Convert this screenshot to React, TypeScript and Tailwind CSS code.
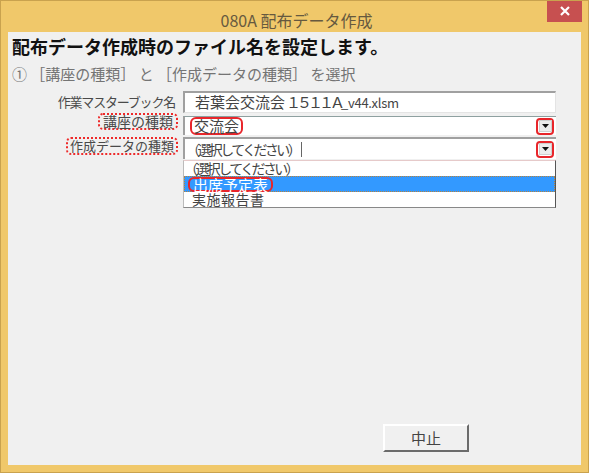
import React from "react";

const font = { fontFamily: '"Noto Sans CJK JP", "Noto Sans", sans-serif' };

const Arrow = () => (
    <div className="flex items-center justify-center rounded-[4px] border-2 border-[#e8262b] w-[18px] h-[17px] ml-auto mr-[2px]">
        <div className="flex items-center justify-center w-[13px] h-[12px] bg-[#ececec] border border-[#d0d0d0]">
            <svg width="7" height="4" viewBox="0 0 7 4">
                <path d="M0 0 L7 0 L3.5 4 Z" fill="#111" />
            </svg>
        </div>
    </div>
);

export default function App() {
    return (
        <div
            className="w-[589px] h-[473px] bg-[#f0c86a] border border-[#c9a24e] flex flex-col overflow-hidden"
            style={font}
        >
            {/* title bar */}
            <div className="relative h-[31px] flex items-center justify-center">
                <span className="text-[16px] text-[#66593f] mt-[6px] ml-[4px]">080A 配布データ作成</span>
                <div className="absolute top-[-1px] right-[6px] w-[35px] h-[22px] bg-[#c75050] flex items-center justify-center">
                    <svg width="10" height="10" viewBox="0 0 10 10">
                        <path d="M1 1 L9 9 M9 1 L1 9" stroke="#fff" strokeWidth="2.2" />
                    </svg>
                </div>
            </div>

            {/* content */}
            <div className="flex-1 mx-[7px] mb-[7px] bg-[#f0f0f0] flex flex-col">
                <h1 className="mt-[2px] pl-[4px] text-[18px] leading-[24px] font-bold text-[#111]">
                    配布データ作成時のファイル名を設定します。
                </h1>
                <p className="mt-[6px] pl-[4px] text-[15px] leading-[20px] text-[#747474]">
                    ① ［講座の種類］ と ［作成データの種類］ を選択
                </p>

                <div className="mt-[7px] grid grid-cols-[167px_373px] gap-x-[8px] text-[13px] text-[#4a4a4a]">
                    {/* row 1 */}
                    <div className="h-[22px] flex items-center justify-end tracking-[-1.2px]">作業マスターブック名</div>
                    <div className="h-[22px] bg-white border-t-2 border-l-2 border-[#a0a0a0] border-r border-b border-r-[#e4e4e4] border-b-[#e4e4e4] flex items-center pl-[10px] text-[15px] text-[#444]">
                        若葉会交流会<span className="tracking-[-4px] ml-[1px]">１５１１Ａ</span>
                        <span className="text-[13px] tracking-[-0.3px]">_v44.xlsm</span>
                    </div>

                    {/* row 2 */}
                    <div className="mt-[3px] h-[19px] flex items-start justify-end">
                        <span className="mt-[-3px] border-2 border-dotted border-[#ee2a2a] rounded-[5px] px-[3px] leading-[13px] text-[14px] mr-[-3px]">
                            講座の種類
                        </span>
                    </div>
                    <div className="mt-[3px] h-[19px] bg-white border-t border-l-2 border-t-[#8ea0a0] border-l-[#a0a0a0] flex items-center pl-[5px] text-[15px] text-[#444]">
                        <span className="border-2 border-[#e8262b] rounded-[6px] px-[2px] leading-[14px]">交流会</span>
                        <Arrow />
                    </div>

                    {/* row 3 */}
                    <div className="mt-[2px] h-[22px] flex items-start justify-end">
                        <span className="border-2 border-dotted border-[#ee2a2a] rounded-[5px] px-[2px] leading-[14px] mr-[-3px]">
                            作成データの種類
                        </span>
                    </div>
                    <div className="mt-[2px] h-[22px] bg-white border-t-2 border-l-2 border-[#a0a0a0] flex items-center pl-[1px] text-[14px] text-[#444]">
                        <span className="tracking-[-2.6px]">（選択してください）</span>
                        <span className="ml-[2px] w-px h-[15px] bg-[#666]"></span>
                        <Arrow />
                    </div>

                    {/* dropdown list */}
                    <div></div>
                    <div className="mt-[1px] h-[48px] bg-white border border-t-[#e6caca] border-l-[#bbbbbb] border-r-[#555] border-b-[#888] flex flex-col text-[14px] text-[#444]">
                        <div className="h-[15px] leading-[14px] tracking-[-2.6px]">（選択してください）</div>
                        <div className="h-[16px] bg-[#3399ff] border border-dotted border-[#b8823a] flex items-center text-white">
                            <span className="border-2 border-[#e8262b] rounded-[6px] ml-[3px] px-[3px] leading-[11px] text-[15px]">出席予定表</span>
                        </div>
                        <div className="h-[15px] leading-[15px] pl-[8px] tracking-[0.5px]">実施報告書</div>
                    </div>
                </div>

                {/* buttons */}
                <div className="mt-auto flex justify-end pr-[112px] pb-[13px]">
                    <div className="w-[86px] h-[28px] bg-[#f0f0f0] border-t-2 border-l-2 border-white border-r-2 border-b-2 border-r-[#6b6b6b] border-b-[#6b6b6b] flex items-center justify-center text-[15px] text-[#444]">
                        中止
                    </div>
                </div>
            </div>
        </div>
    );
}
